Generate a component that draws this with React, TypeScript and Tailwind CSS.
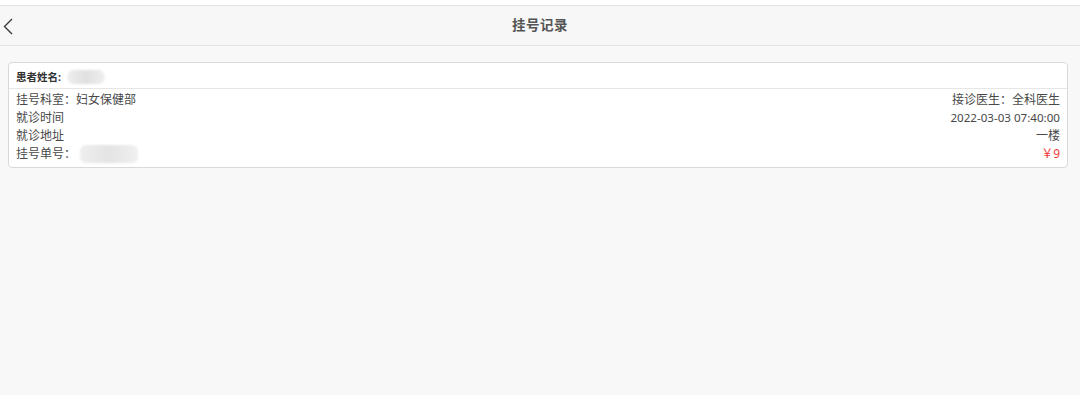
import React from "react";

export default function App() {
  const font = { fontFamily: '"Noto Sans", "Noto Sans CJK SC", sans-serif' };
  return (
    <div className="w-[1080px] h-[395px] bg-[#f8f8f8] flex flex-col" style={font}>
      <div className="h-[5px] bg-white" />
      <div className="h-[41px] border-y border-[#e2e2e2] bg-[#f7f7f7] relative flex items-center justify-center">
        <svg className="absolute left-[2px] top-[11px]" width="12" height="18" viewBox="0 0 12 18">
          <path d="M10 2 L2.5 9.5 L10 17" fill="none" stroke="#3a3a3a" strokeWidth="1.4" />
        </svg>
        <span className="text-[13.5px] font-bold text-[#555] tracking-[0.5px]">挂号记录</span>
      </div>
      <div className="px-[8px] pt-[16px] pr-[12px]">
        <div className="bg-white border border-[#d9d9d9] rounded-[4px] flex flex-col">
          <div className="h-[26px] flex items-end px-[7px] pb-[4px] border-b border-[#e6e6e6]">
            <span className="text-[10.5px] font-bold text-[#333] leading-[14px]">患者姓名:</span>
            <span className="ml-[6px] w-[38px] h-[14px] rounded-full bg-gradient-to-r from-[#eeeeee] via-[#e0e0e0] to-[#efefef] blur-[1px]" />
          </div>
          <div className="flex flex-col px-[7px] pt-[2px] pb-[4px] text-[12px] leading-[18px] text-[#484848]">
            <div className="flex justify-between">
              <span>挂号科室：妇女保健部</span>
              <span>接诊医生：全科医生</span>
            </div>
            <div className="flex justify-between">
              <span>就诊时间</span>
              <span className="text-[11.6px]">2022-03-03 07:40:00</span>
            </div>
            <div className="flex justify-between">
              <span>就诊地址</span>
              <span>一楼</span>
            </div>
            <div className="flex justify-between items-center">
              <span className="flex items-center">
                挂号单号：
                <span className="ml-[4px] w-[58px] h-[18px] rounded-[6px] bg-gradient-to-r from-[#eeeeee] via-[#e4e4e4] to-[#f0f0f0] blur-[1px]" />
              </span>
              <span className="text-[#f03a3a]">￥9</span>
            </div>
          </div>
        </div>
      </div>
    </div>
  );
}
